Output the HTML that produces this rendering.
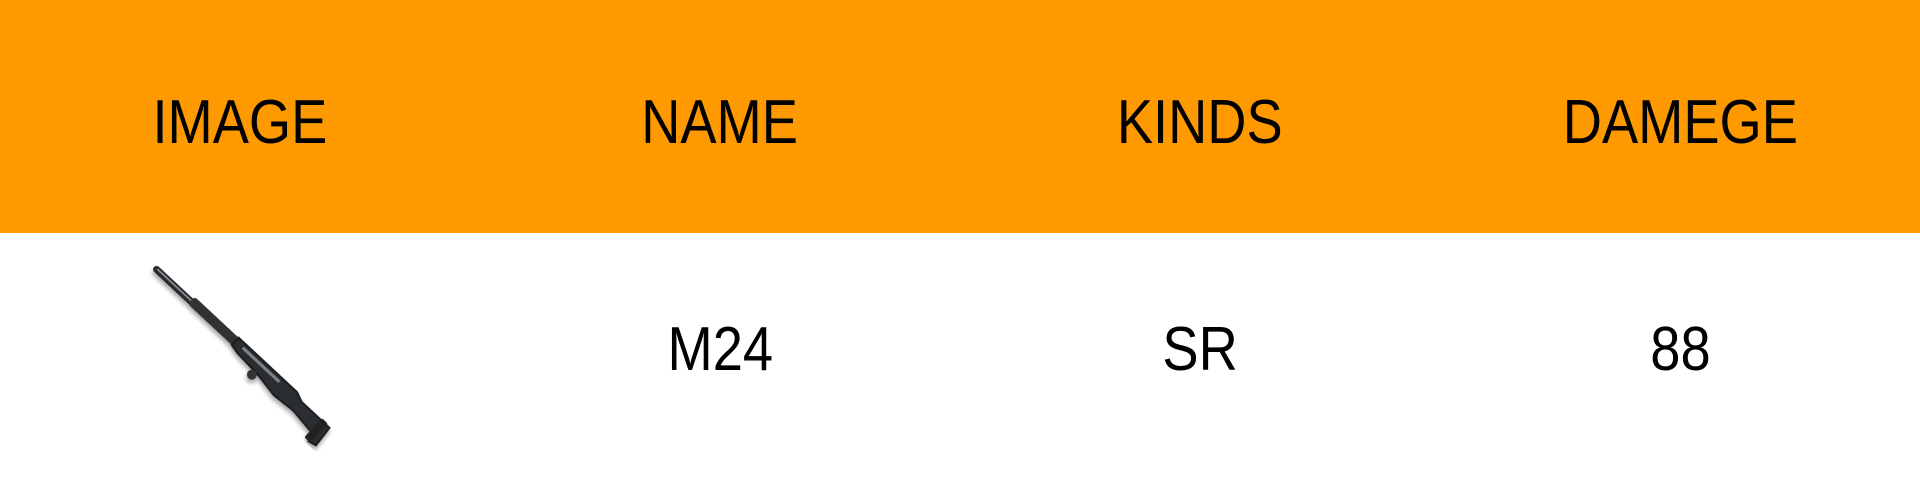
<!DOCTYPE html>
<html><head><meta charset="utf-8"><style>
html,body{margin:0;padding:0;width:1920px;height:479px;overflow:hidden;background:#fff;font-family:"Liberation Sans",sans-serif;}
.hd{position:absolute;left:0;top:0;width:1920px;height:233px;background:#ff9900;}
.t{position:absolute;width:480px;text-align:center;font-size:62px;color:#000;line-height:60px;}
.t span{display:inline-block;transform:scaleX(0.875);}
</style></head><body>
<div class="hd"></div>
<div class="t" style="left:0;top:93px"><span>IMAGE</span></div>
<div class="t" style="left:480px;top:93px"><span>NAME</span></div>
<div class="t" style="left:960px;top:93px"><span>KINDS</span></div>
<div class="t" style="left:1440px;top:93px"><span>DAMEGE</span></div>
<div class="t" style="left:480px;top:320px"><span>M24</span></div>
<div class="t" style="left:960px;top:320px"><span>SR</span></div>
<div class="t" style="left:1440px;top:320px"><span>88</span></div>
<svg style="position:absolute;left:130px;top:250px" width="220" height="210" viewBox="0 0 220 210">
<defs><filter id="s"><feDropShadow dx="2" dy="3" stdDeviation="2" flood-opacity="0.35"/></filter></defs>
<g transform="translate(24,17) rotate(43)" filter="url(#s)">
<rect x="0" y="-3.5" width="120" height="7" rx="3.5" fill="#2a2c2e"/>
<rect x="4" y="-1.5" width="110" height="1.6" fill="#8a9096"/>
<rect x="50" y="-6" width="80" height="10" rx="3" fill="#303234"/>
<path d="M110 -6 L190 -6 L200 -2 L238 -2 L240 20 L232 22 L232 14 L200 10 L175 12 L150 8 L120 6 L110 4 Z" fill="#2c2e30" stroke="#1a1b1c" stroke-width="2"/>
<rect x="120" y="-3" width="50" height="3" fill="#7c8288"/>
<circle cx="145" cy="12" r="5" fill="#333537"/>
<rect x="226" y="-4" width="8" height="26" rx="2" fill="#202122"/>
</g>
</svg>
</body></html>
